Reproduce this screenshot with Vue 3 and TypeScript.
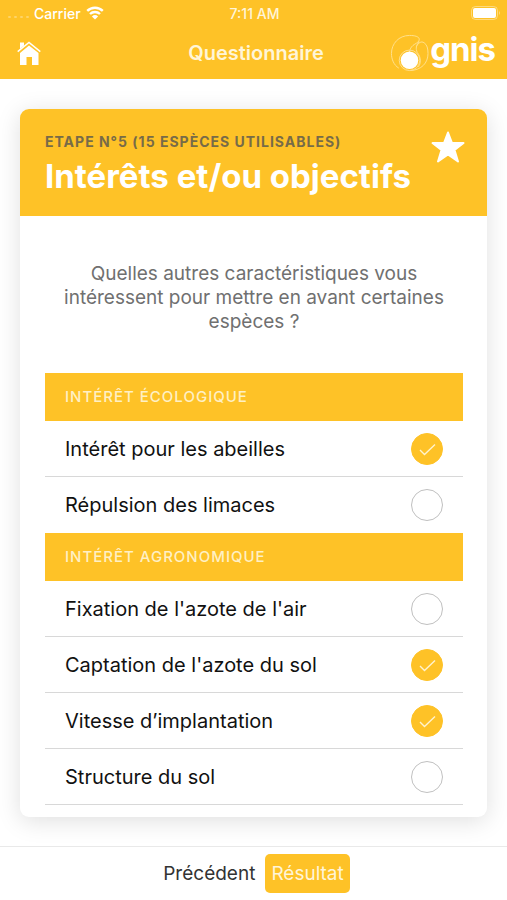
<script setup lang="ts">
import { ref } from 'vue'

interface Option {
  id: string
  label: string
  checked: boolean
}

interface Section {
  title: string
  options: Option[]
}

const sections = ref<Section[]>([
  {
    title: 'Intérêt écologique',
    options: [
      { id: 'abeilles', label: 'Intérêt pour les abeilles', checked: true },
      { id: 'limaces', label: 'Répulsion des limaces', checked: false },
    ],
  },
  {
    title: 'Intérêt agronomique',
    options: [
      { id: 'fixation', label: "Fixation de l'azote de l'air", checked: false },
      { id: 'captation', label: "Captation de l'azote du sol", checked: true },
      { id: 'implantation', label: 'Vitesse d’implantation', checked: true },
      { id: 'structure', label: 'Structure du sol', checked: false },
    ],
  },
])
</script>

<template>
  <div class="screen">
    <header class="top">
      <div class="status">
        <div class="carrier">
          <span class="dots"><i v-for="n in 4" :key="n"></i></span>
          <span>Carrier</span>
          <svg class="wifi" viewBox="0 0 18 14" aria-hidden="true">
            <path d="M1.2 4.9a11.2 11.2 0 0 1 15.6 0M4 8a7.2 7.2 0 0 1 10 0" />
            <path class="solid" d="M9 13.6 5.9 10.4a4.6 4.6 0 0 1 6.2 0z" />
          </svg>
        </div>
        <span class="clock">7:11 AM</span>
        <svg class="battery" viewBox="0 0 30 14" aria-hidden="true">
          <rect class="case" x="0.5" y="0.5" width="26" height="13" rx="4" />
          <rect x="2" y="2" width="23" height="10" rx="2" />
          <path class="tip" d="M28 5q2 2 0 4z" />
        </svg>
      </div>
      <nav class="bar">
        <a class="home" href="#" aria-label="Accueil">
          <svg viewBox="0 0 24 24" aria-hidden="true">
            <path d="M3 1.600h4v3L3 8z" />
            <path d="M12 4.600 21.500 12v12H15v-8H9.500v8H3V12z" />
            <path class="roof" d="M.7 10.600 12 1.400l11.300 9.200" />
          </svg>
        </a>
        <h1 class="title">Questionnaire</h1>
        <div class="brand">
          <svg viewBox="0 0 40 40" aria-hidden="true">
            <path d="M9 36C4 33 1.500 27 1.500 21 1.500 11 9 2.500 20 2.500c5 0 10 1 10 4 0 5-9 4-10 13" />
            <path d="M27 14c2-4 5-6 8-4 3 2 4 6 4 11 0 10-7 17-18 17.500" />
            <path d="M30 9c-3 3-4 7-2 11 4 5 4 11 1 15" />
            <circle cx="20" cy="28" r="10.500" />
            <circle class="seed" cx="20" cy="28" r="9" />
          </svg>
          <span>gnis</span>
        </div>
      </nav>
    </header>

    <main class="content">
      <article class="card">
        <div class="card-head">
          <div>
            <p class="step">Etape n°5 (15 espèces utilisables)</p>
            <h2>Intérêts et/ou objectifs</h2>
          </div>
          <button class="star" type="button" aria-label="Favori">
            <svg viewBox="0 0 34 32" aria-hidden="true">
              <path d="M17 1.500 21 12h11.500l-9 7 3.500 11.500-10-7-10 7L10.500 19l-9-7H13z" />
            </svg>
          </button>
        </div>
        <div class="card-body">
          <p class="question">
            Quelles autres caractéristiques vous intéressent pour mettre en avant certaines espèces ?
          </p>
          <section v-for="section in sections" :key="section.title">
            <h3>{{ section.title }}</h3>
            <ul>
              <li v-for="option in section.options" :key="option.id">
                <label :for="option.id">{{ option.label }}</label>
                <span class="check">
                  <input :id="option.id" v-model="option.checked" type="checkbox" />
                  <svg v-if="option.checked" viewBox="0 0 32 32" aria-hidden="true">
                    <path d="m9 17 4.500 4.500L24 11.500" />
                  </svg>
                </span>
              </li>
            </ul>
          </section>
        </div>
      </article>
    </main>

    <footer class="actions">
      <button class="previous" type="button">Précédent</button>
      <button class="result" type="button">Résultat</button>
    </footer>
  </div>
</template>

<style>
body {
  margin: 0;
  background: #fff;
}
</style>

<style scoped>
* {
  box-sizing: border-box;
}
.screen {
  display: flex;
  flex-direction: column;
  min-height: 100vh;
  font-family: Inter, 'Liberation Sans', sans-serif;
  color: #111;
}
h1, h2, h3, p, ul {
  margin: 0;
  padding: 0;
}
button {
  border: 0;
  background: none;
  font: inherit;
  cursor: pointer;
}
svg {
  display: block;
}
.top {
  height: 79px;
  background: #fec227;
  color: #fff;
}
.status {
  display: grid;
  grid-template-columns: 1fr auto 1fr;
  align-items: center;
  height: 26px;
  padding: 0 6px 0 8px;
  font-size: 14px;
  font-weight: 500;
}
.carrier {
  display: flex;
  align-items: center;
  gap: 5px;
}
.dots {
  display: flex;
  gap: 3px;
  padding-top: 8px;
}
.dots i {
  width: 3px;
  height: 2px;
  border-radius: 1px;
  background: #fff;
  opacity: 0.3;
}
.wifi {
  width: 18px;
  height: 14px;
  fill: none;
  stroke: #fff;
  stroke-width: 2.4;
}
.wifi .solid {
  fill: #fff;
  stroke: none;
}
.clock {
  color: #fff5d8;
}
.battery {
  width: 30px;
  height: 14px;
  justify-self: end;
  fill: #fff;
}
.battery .case {
  fill: none;
  stroke: #fff;
  opacity: 0.4;
}
.battery .tip {
  opacity: 0.4;
}
.bar {
  display: grid;
  grid-template-columns: 1fr auto 1fr;
  align-items: center;
  height: 53px;
  padding: 0 12px 0 17px;
}
.home {
  justify-self: start;
}
.home svg {
  width: 24px;
  height: 24px;
  fill: #fff;
}
.home .roof {
  fill: none;
  stroke: #fff;
  stroke-width: 1.5;
}
.title {
  font-size: 20px;
  font-weight: 600;
  color: #fff5d8;
}
.brand {
  display: flex;
  justify-self: end;
  align-items: center;
  gap: 1px;
  font-size: 33px;
  font-weight: 700;
  line-height: 36px;
  letter-spacing: -1px;
}
.brand span {
  padding-bottom: 8px;
}
.brand svg {
  width: 39px;
  height: 39px;
  fill: none;
  stroke: #ffe08e;
  stroke-width: 1;
}
.brand .seed {
  fill: #fff;
  stroke: none;
}
.content {
  flex: 1;
  padding: 30px 20px 29px;
}
.card {
  overflow: hidden;
  border-radius: 9px;
  background: #fff;
  box-shadow: 0 4px 24px rgba(0, 0, 0, 0.13);
}
.card-head {
  display: flex;
  justify-content: space-between;
  height: 107px;
  padding: 21px 22px 0 25px;
  background: #fec227;
}
.step {
  font-size: 14px;
  font-weight: 700;
  line-height: 24px;
  letter-spacing: 1px;
  text-transform: uppercase;
  color: #776b48;
}
h2 {
  font-size: 33px;
  font-weight: 700;
  line-height: 44px;
  color: #fff;
  white-space: nowrap;
}
.star {
  align-self: flex-start;
  padding: 0;
}
.star svg {
  width: 34px;
  height: 34px;
  fill: #fff;
  stroke: #fff;
  stroke-width: 2;
  stroke-linejoin: round;
}
.card-body {
  padding: 46px 24px 12px 25px;
}
.question {
  padding-bottom: 39px;
  font-size: 19px;
  line-height: 24px;
  text-align: center;
  color: #707070;
}
h3 {
  padding: 0 20px;
  background: #fec227;
  font-size: 15px;
  font-weight: 500;
  line-height: 48px;
  letter-spacing: 1px;
  text-transform: uppercase;
  color: #fff0c4;
}
ul {
  list-style: none;
}
li {
  display: flex;
  align-items: center;
  justify-content: space-between;
  height: 56px;
  padding: 0 20px;
  border-bottom: 1px solid #d8d8d8;
  font-size: 20px;
}
section:not(:last-child) li:last-child {
  border-bottom-color: transparent;
}
label {
  flex: 1;
}
.check {
  display: grid;
  width: 32px;
  height: 32px;
}
.check input,
.check svg {
  grid-area: 1 / 1;
  width: 32px;
  height: 32px;
}
.check input {
  margin: 0;
  appearance: none;
  border: 1px solid #c0c0c0;
  border-radius: 50%;
}
.check input:checked {
  border-color: #fec227;
  background: #fec227;
}
.check svg {
  fill: none;
  stroke: #fff3cf;
  stroke-width: 1.4;
  pointer-events: none;
}
.actions {
  display: flex;
  align-items: center;
  justify-content: center;
  gap: 10px;
  height: 54px;
  padding-left: 6px;
  border-top: 1px solid #e9e9e9;
  font-size: 19px;
}
.previous {
  padding: 0;
  color: #333;
}
.result {
  height: 39px;
  padding: 0 6px;
  border-radius: 5px;
  background: #fec227;
  color: #fff5d8;
}
</style>
